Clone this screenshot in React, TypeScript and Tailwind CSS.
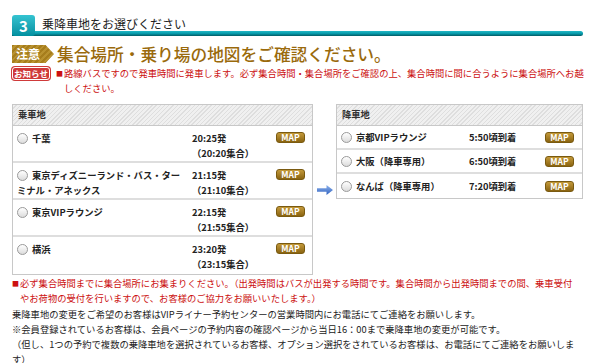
import React from "react";

type Stop = { name: React.ReactNode; time: string; gather?: string };

const boarding: Stop[] = [
  { name: "千葉", time: "20:25発", gather: "（20:20集合）" },
  {
    name: (
      <>
        東京ディズニーランド・バス・ター
        <br />
        ミナル・アネックス
      </>
    ),
    time: "21:15発",
    gather: "（21:10集合）",
  },
  { name: "東京VIPラウンジ", time: "22:15発", gather: "（21:55集合）" },
  { name: "横浜", time: "23:20発", gather: "（23:15集合）" },
];

const alighting: Stop[] = [
  { name: "京都VIPラウンジ", time: "5:50頃到着" },
  { name: "大阪（降車専用）", time: "6:50頃到着" },
  { name: "なんば（降車専用）", time: "7:20頃到着" },
];

function Radio() {
  return (
    <span className="mr-[4px] inline-block h-[11px] w-[11px] rounded-full border border-[#9a9a9a] bg-gradient-to-b from-white to-[#dcdcdc] align-[-2px]" />
  );
}

function MapButton() {
  return (
    <span className="flex h-[11px] w-[29px] items-center justify-center rounded-[3px] border border-[#7a5a10] bg-gradient-to-b from-[#c49a3a] to-[#8a6410] text-[8.5px] font-bold leading-none text-white">
      MAP
    </span>
  );
}

function TableHead({ label }: { label: string }) {
  return (
    <div className="flex h-[21px] items-center border-b border-[#c8c8c8] bg-[image:repeating-linear-gradient(135deg,#f0f0f0_0px,#f0f0f0_2px,#dedede_2px,#dedede_3px)] pl-[5px] text-[9.3px] font-bold text-[#333]">
      {label}
    </div>
  );
}

export default function App() {
  return (
    <div className="h-[363px] w-[600px] overflow-hidden bg-white px-[12px] pt-[15px] font-['Noto_Sans_CJK_JP',sans-serif] text-[#222]">
      {/* step header */}
      <div className="w-[571px]">
        <div className="flex items-end gap-[7px]">
          <div className="relative z-10 flex h-[21px] w-[23px] items-center justify-center rounded-[3px] bg-gradient-to-b from-[#34c3d1] to-[#0090a0] text-[15px] font-bold leading-none text-white">
            3
          </div>
          <span className="mb-[6px] text-[12px] leading-none text-[#222]">
            乗降車地をお選びください
          </span>
        </div>
        <div className="-mt-[5px] h-[5px] rounded-r-full bg-gradient-to-b from-[#22b8c6] via-[#069bab] to-[#045c66]" />
      </div>

      {/* caution title */}
      <div className="mt-[9px] flex items-center gap-[3px]">
        <div className="flex h-[18px] w-[42px] items-center bg-[image:repeating-linear-gradient(135deg,#a67d1c_0px,#a67d1c_2px,#b9922f_2px,#b9922f_4px)] pl-[4px] text-[12px] font-bold leading-none text-white [clip-path:polygon(0_0,80%_0,100%_50%,80%_100%,0_100%)]">
          注意
        </div>
        <span className="text-[16.7px] font-medium leading-none text-[#9a6a0c]">
          集合場所・乗り場の地図をご確認ください。
        </span>
      </div>

      {/* notice */}
      <div className="mt-[3px] flex items-start text-[9.3px] leading-[15px] text-[#cc1010]">
        <span className="mt-[1px] flex h-[13px] w-[38px] items-center justify-center rounded-[3px] border border-white bg-[#cf3a3a] text-[8.5px] font-bold leading-none text-white ring-1 ring-[#cf3a3a]">
          お知らせ
        </span>
        <span className="ml-[6px] text-[7px]">■</span>
        <p className="ml-[1px]">
          路線バスですので発車時間に発車します。必ず集合時間・集合場所をご確認の上、集合時間に間に合うように集合場所へお越
          <br />
          しください。
        </p>
      </div>

      {/* stops */}
      <div className="mt-[8px] flex items-start">
        <div className="w-[301px] border border-[#c8c8c8]">
          <TableHead label="乗車地" />
          {boarding.map((s, i) => (
            <div
              key={i}
              className={`flex h-[37px] pl-[4px] pt-[5px] text-[9.3px] font-bold leading-[15px] ${
                i < boarding.length - 1 ? "border-b-2 border-[#dedede]" : ""
              }`}
            >
              <div className="w-[175px]">
                <Radio />
                {s.name}
              </div>
              <div className="w-[84px]">
                <div>{s.time}</div>
                <div>{s.gather}</div>
              </div>
              <div className="mt-[1px]">
                <MapButton />
              </div>
            </div>
          ))}
        </div>

        <div className="flex w-[23px] justify-center self-center">
          <svg width="16" height="10" viewBox="0 0 16 10">
            <defs>
              <linearGradient id="arr" x1="0" y1="0" x2="0" y2="1">
                <stop offset="0" stopColor="#8fb3ec" />
                <stop offset="1" stopColor="#2f62c0" />
              </linearGradient>
            </defs>
            <path d="M0 3.3h9.5V0L16 5l-6.5 5V6.7H0z" fill="url(#arr)" />
          </svg>
        </div>

        <div className="w-[247px] border border-[#c8c8c8]">
          <TableHead label="降車地" />
          {alighting.map((s, i) => (
            <div
              key={i}
              className={`flex h-[24px] items-center pl-[4px] text-[9.3px] font-bold leading-[15px] ${
                i < alighting.length - 1 ? "border-b-2 border-[#dedede]" : ""
              }`}
            >
              <div className="w-[128px]">
                <Radio />
                {s.name}
              </div>
              <div className="w-[76px]">{s.time}</div>
              <MapButton />
            </div>
          ))}
        </div>
      </div>

      {/* footnotes */}
      <div className="mt-[1px] flex items-start text-[9.3px] leading-[15px] text-[#cc1010]">
        <span className="w-[8px] text-[7px]">■</span>
        <p>
          必ず集合時間までに集合場所にお集まりください。（出発時間はバスが出発する時間です。集合時間から出発時間までの間、乗車受付
          <br />
          やお荷物の受付を行いますので、お客様のご協力をお願いいたします。）
        </p>
      </div>
      <p className="mt-[1px] text-[9.3px] leading-[15px] text-[#222]">
        乗降車地の変更をご希望のお客様はVIPライナー予約センターの営業時間内にお電話にてご連絡をお願いします。
        <br />
        ※会員登録されているお客様は、会員ページの予約内容の確認ページから当日16：00まで乗降車地の変更が可能です。
        <br />
        （但し、1つの予約で複数の乗降車地を選択されているお客様、オプション選択をされているお客様は、お電話にてご連絡をお願いしま
        <br />
        す）
      </p>
    </div>
  );
}
